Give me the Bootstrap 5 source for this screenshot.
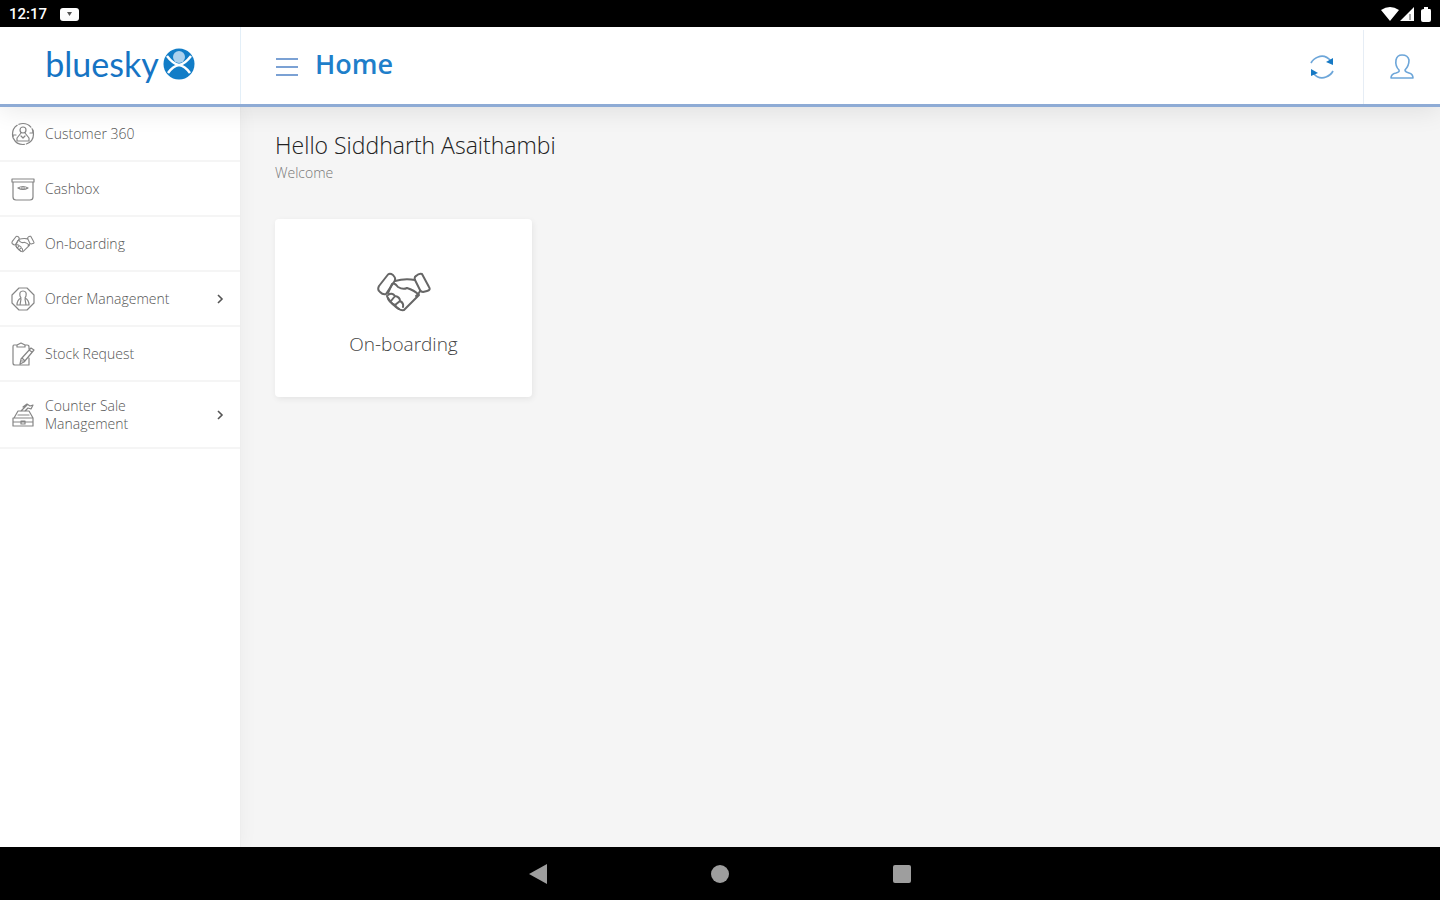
<!DOCTYPE html>
<html lang="en">
<head>
<meta charset="utf-8">
<meta name="viewport" content="width=device-width, initial-scale=1">
<title>Home</title>
<link href="https://cdn.jsdelivr.net/npm/bootstrap@5.3.0/dist/css/bootstrap.min.css" rel="stylesheet">
<style>
body { font-family: "Open Sans", "Noto Sans", sans-serif; background: #f5f5f5; color: #333; }
svg { display: block; flex: none; }
button { background: none; border: 0; padding: 0; }
.status-bar { height: 27px; background: #000; color: #fff; font: 500 15px/27px Roboto, sans-serif; padding: 1px 7px 0 9px; }
.app-header { height: 80px; background: #fff; border-bottom: 3px solid #8eabd5; box-shadow: 0 4px 24px rgba(0,0,0,.09); z-index: 2; }
.brand-area { width: 241px; border-right: 1px solid #e3eff8; text-decoration: none; padding: 0 0 4px; }
.brand-word { font: 400 34px/40px Lato, sans-serif; color: #1674c4; }
.page-title { font-size: 27px; line-height: 36px; font-weight: 600; color: #1f7fca; margin: 0 0 6px 12px; }
.header-row { padding: 3px 0 0 30px; }
.user-btn { width: 77px; border-left: 1px solid #e6edf5; }
.side-menu { width: 241px; background: #fff; border-right: 1px solid #ededed; box-shadow: 2px 0 16px rgba(0,0,0,.04); }
.menu-item { display: flex; align-items: center; gap: 10px; min-height: 55px; padding: 9px 16px 9px 11px; border-bottom: 2px solid #f5f5f5; color: #555; font-size: 14px; font-weight: 300; line-height: 18px; text-decoration: none; }
.menu-item span { width: 160px; }
.menu-item:last-child { min-height: 67px; }
.menu-item:last-child span { width: 120px; }
.menu-item .caret { margin-left: auto; }
.line-art { fill: none; stroke: #858585; stroke-width: 1.2; stroke-linejoin: round; stroke-linecap: round; }
.content-area { padding: 23px 34px; }
.greeting { font-size: 23px; line-height: 30px; font-weight: 350; color: #222; }
.welcome { font-size: 14px; font-weight: 300; line-height: 18px; color: #777; margin: 4px 0 37px; }
.tile { width: 257px; height: 178px; background: #fff; border-radius: 4px; box-shadow: 1px 2px 6px rgba(0,0,0,.07); color: #444; font-size: 19px; font-weight: 300; line-height: 26px; text-decoration: none; gap: 19px; padding-top: 12px; }
.nav-keys { height: 53px; background: #000; gap: 162px; }
.nav-keys svg { fill: #9e9e9e; }
</style>
</head>
<body>
<svg class="d-none" aria-hidden="true">
  <symbol id="handshake" viewBox="0 0 56 40">
    <path d="M12 2.500Q14 1 17 3L18.500 5Q20 7 18 10L10 22Q7 23 4 20Q1 18 3 14Z"/>
    <path d="M40 4Q43 1 46 2L53 15Q55 18 51 19L47 20Q45 20 44 18L39 8Q38 5 40 4Z"/>
    <path d="M19 9Q29 6 39 8M12 21L16 12Q18 10 22 15Q27 18 31 16Q38 18 43 23L28 38Q23 39 19 33Q13 31 11 24M44 19Q43 22 40 24"/>
    <path d="M12 23Q16 20 19 24Q24 25 24 29Q28 31 27 35M15 29L19 24M19 33L24 29M12 26Q17 34 23 37"/>
  </symbol>
  <symbol id="chevron" viewBox="0 0 8 12"><path d="M2 2l4 4-4 4" fill="none" stroke="#555" stroke-width="1.600"/></symbol>
</svg>
<div class="d-flex flex-column min-vh-100">
  <div class="status-bar d-flex align-items-center">
    <span>12:17</span>
    <svg class="ms-2" width="28" height="18" viewBox="0 0 28 18"><rect x="5" y="3" width="19" height="13" rx="3" fill="#fff"/><path d="M12 7h5l-2.500 4z" fill="#555"/></svg>
    <svg class="ms-auto" width="52" height="18" viewBox="0 0 52 18"><path d="M0 5q9-6 18 0l-9 11zM33 2v14H19z" fill="#fff"/><path d="M29 9v6" stroke="#555"/><path d="M43 2h4v2h2q1 0 1 2v9q0 2-2 2h-6q-2 0-2-2V6q0-2 3-2z" fill="#fff"/></svg>
  </div>
  <header class="app-header d-flex position-relative">
    <a href="#" class="brand-area d-flex align-items-center justify-content-center gap-1" aria-label="bluesky">
      <span class="brand-word">bluesky</span>
      <svg width="32" height="32" viewBox="0 0 32 32"><circle cx="16" cy="16" r="15.500" fill="#127dc7"/><circle cx="16" cy="9" r="6" fill="#acd1ed"/><path d="M4 8Q10 16 16 17Q22 16 28 8M5 25Q10 18 16 17Q22 18 27 25" fill="none" stroke="#fff" stroke-width="2.500"/></svg>
    </a>
    <div class="header-row d-flex align-items-center flex-grow-1">
      <button class="p-1" aria-label="Toggle menu"><svg width="24" height="20" viewBox="0 0 24 20"><path d="M1 2h22M1 10h22M1 18h22" stroke="#7ba1d4" stroke-width="2"/></svg></button>
      <h1 class="page-title">Home</h1>
      <button class="ms-auto me-4 p-1" aria-label="Refresh"><svg width="26" height="28" viewBox="0 0 26 28"><g fill="none" stroke="#6da6d9" stroke-width="1.700"><path d="M2 10Q4 6 9 4Q16 1 22 8M24 18Q22 22 17 24Q10 27 4 20"/></g><path d="M24 5v7l-7-3zM2 23v-7l7 4z" fill="#1679c4"/></svg></button>
      <button class="user-btn d-flex align-items-center justify-content-center align-self-stretch" aria-label="Profile"><svg width="26" height="28" viewBox="0 0 26 28"><path d="M10 17Q6 13 7 7Q8 2 13 2Q19 2 20 7Q20 13 16 17Q16 19 20 20Q24 21 24 25H2Q2 21 7 20Q11 19 10 17Z" fill="none" stroke="#6da6d9" stroke-width="1.600" stroke-linejoin="round"/></svg></button>
    </div>
  </header>
  <div class="d-flex flex-grow-1">
    <nav class="side-menu flex-shrink-0" aria-label="Main">
      <a href="#" class="menu-item"><svg class="line-art" width="24" height="24" viewBox="0 0 24 24"><circle cx="12" cy="12" r="10.500" stroke-dasharray="13 2"/><circle cx="12" cy="8" r="3"/><path d="M10 11l-4 5v3h12v-3l-4-5M10 14l2 2 2-2M22 8v3h-3M2 16v-3h3"/></svg><span>Customer 360</span></a>
      <a href="#" class="menu-item"><svg class="line-art" width="24" height="24" viewBox="0 0 24 24"><path d="M1 2h22v3H1zM2 5v15q0 3 3 3h14q3 0 3-3V5M7 11q5-3 10 0q-5 3-10 0M11 10v2M13 10v2"/></svg><span>Cashbox</span></a>
      <a href="#" class="menu-item"><svg class="line-art" style="stroke-width:2.5" width="24" height="18"><use href="#handshake"/></svg><span>On-boarding</span></a>
      <a href="#" class="menu-item"><svg class="line-art" width="24" height="24" viewBox="0 0 24 24"><path d="M8 1h8l7 7v8l-7 7H8l-7-7V8z"/><path d="M12 4q4 0 3 5l-1 2q4 2 4 7H6q0-5 4-7L9 9q-1-5 3-5M10 12l-1 6M14 12l1 6"/></svg><span>Order Management</span><svg class="caret" width="8" height="12"><use href="#chevron"/></svg></a>
      <a href="#" class="menu-item"><svg class="line-art" width="24" height="24" viewBox="0 0 24 24"><path d="M6 3H3q-1 0-1 2v16q0 2 2 2h14v-7M18 7V5q0-2-2-2h-2M6 5V3l4-2 4 2v2zM20 6l3 2-10 12-4 2 1-5zM11 16l3 3M18 8l3 2M10 19h2"/></svg><span>Stock Request</span></a>
      <a href="#" class="menu-item"><svg class="line-art" width="24" height="28" viewBox="0 0 24 28"><path d="M3 17l4-7h11l4 7M2 17h20v8H2zM2 21h20M10 20h4v3h-4zM7 14h11M10 10l6-6M12 6l4-3 3 2 3-1-2 4-3-1-3 3"/></svg><span>Counter Sale Management</span><svg class="caret" width="8" height="12"><use href="#chevron"/></svg></a>
    </nav>
    <main class="content-area flex-grow-1">
      <h2 class="greeting mb-0">Hello Siddharth Asaithambi</h2>
      <p class="welcome">Welcome</p>
      <a href="#" class="tile d-flex flex-column align-items-center justify-content-center">
        <svg class="line-art" style="stroke:#666;stroke-width:2" width="56" height="40"><use href="#handshake"/></svg>
        <span>On-boarding</span>
      </a>
    </main>
  </div>
  <footer class="nav-keys d-flex align-items-center justify-content-center">
    <button aria-label="Back"><svg width="20" height="20" viewBox="0 0 20 20"><path d="M1 10L19 0v20z"/></svg></button>
    <button aria-label="Home screen"><svg width="20" height="20" viewBox="0 0 20 20"><circle cx="10" cy="10" r="9"/></svg></button>
    <button aria-label="Recent apps"><svg width="20" height="20" viewBox="0 0 20 20"><rect x="1" y="1" width="18" height="18" rx="2"/></svg></button>
  </footer>
</div>
<script src="https://cdn.jsdelivr.net/npm/bootstrap@5.3.0/dist/js/bootstrap.bundle.min.js"></script>
</body>
</html>
